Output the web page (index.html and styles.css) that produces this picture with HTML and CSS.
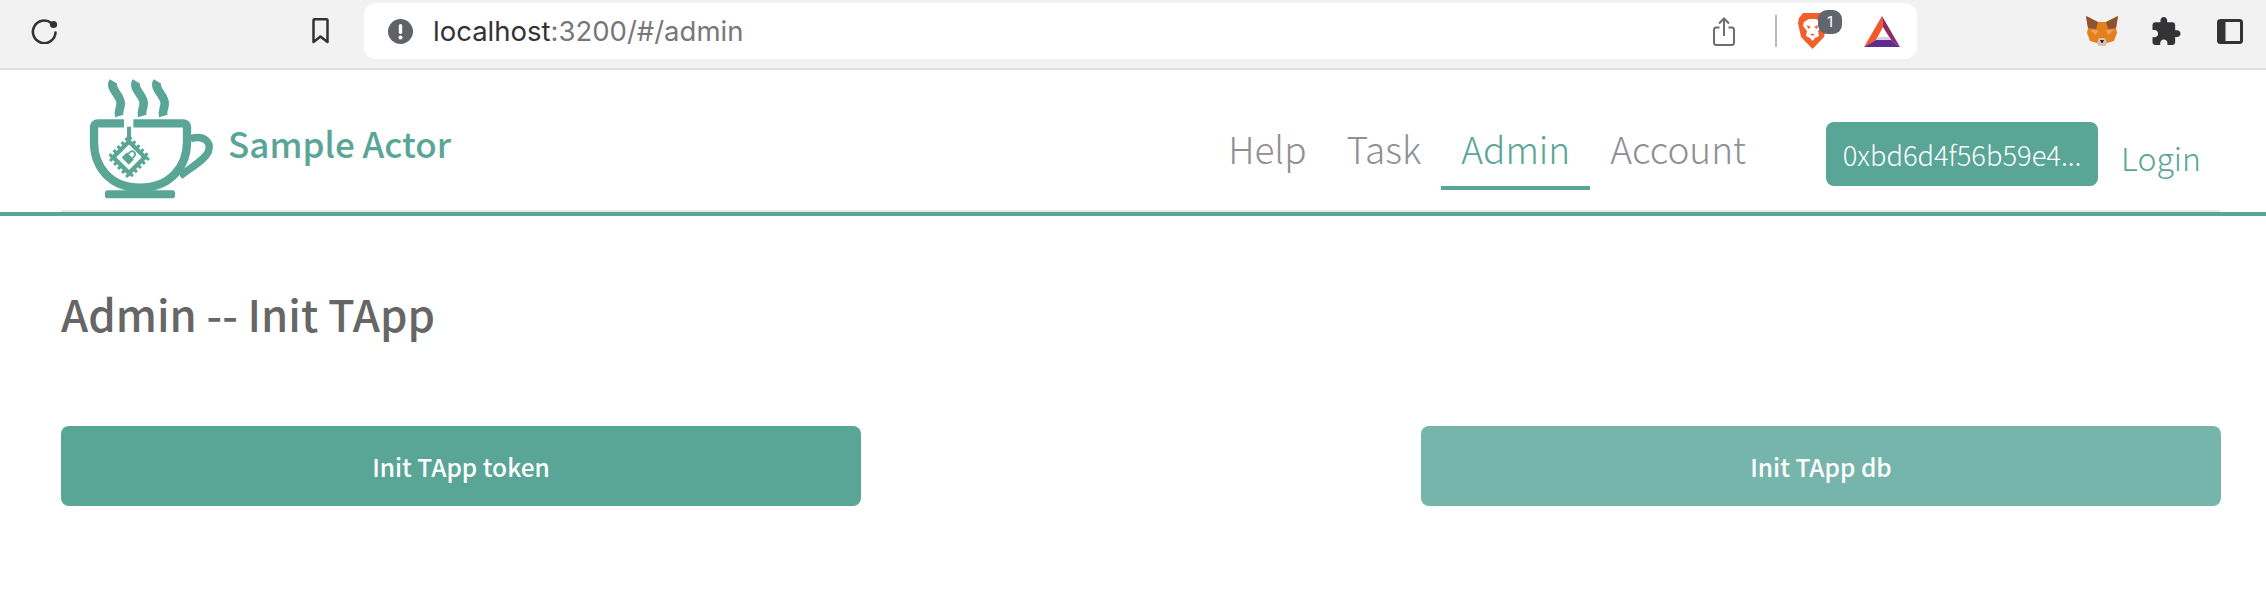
FILE: index.html
```html
<!DOCTYPE html>
<html lang="en">
<head>
    <meta charset="UTF-8">
    <meta name="viewport" content="width=device-width, initial-scale=1.0">
    <title>Sample Actor</title>
    <link rel="stylesheet" href="styles.css">
</head>
<body>
    <!-- Browser toolbar -->
    <div class="toolbar">
        <svg class="icon-reload" width="27" height="26" viewBox="0 0 27 26">
            <path d="M20.5 5.2A11.3 11.3 0 1 0 24.5 14.5" fill="none" stroke="#333336" stroke-width="2.6" stroke-linecap="round"/>
            <circle cx="22.5" cy="6.5" r="3.6" fill="#333336"/>
        </svg>
        <svg class="icon-bookmark" width="19" height="26" viewBox="0 0 19 26">
            <path d="M2.5 2.2Q2.5 1.3 3.5 1.3H15.5Q16.5 1.3 16.5 2.2V24L9.5 18.5L2.5 24Z" fill="none" stroke="#333336" stroke-width="2.5" stroke-linejoin="round"/>
        </svg>
        <div class="address-bar">
            <svg class="icon-alert" width="25" height="25" viewBox="0 0 25 25">
                <circle cx="12.5" cy="12.5" r="12.5" fill="#5f6368"/>
                <rect x="10.8" y="5" width="3.4" height="10" rx="1.7" fill="#fff"/>
                <circle cx="12.5" cy="18.5" r="2" fill="#fff"/>
            </svg>
            <span class="url"><span class="url-host">localhost</span>:3200/#/admin</span>
            <svg class="icon-share" width="22" height="29" viewBox="0 0 22 29">
                <path d="M6.5 10.5H3.5Q1 10.5 1 13V25.5Q1 28 3.5 28H18.5Q21 28 21 25.5V13Q21 10.5 18.5 10.5H15.5" fill="none" stroke="#6e6e70" stroke-width="2"/>
                <path d="M11 19V1.5M6 6.5L11 1.5L16 6.5" fill="none" stroke="#6e6e70" stroke-width="2"/>
            </svg>
            <div class="bar-divider"></div>
            <div class="brave-wrap">
                <svg width="29" height="36" viewBox="0 0 29 36">
                    <path d="M5 0H24L28 5L29 10L26 24L14.5 36L3 24L0 10L1 5Z" fill="#f1602a"/>
                    <path d="M6 9L11 6H18L23 9L24 13L20 18L21 23L17 25L14.5 28L12 25L8 23L9 18L5 13Z" fill="#fff"/>
                    <path d="M9 12L13 14L10 16ZM20 12L16 14L19 16ZM12 21H17L14.5 23Z" fill="#f1602a"/>
                </svg>
                <span class="badge">1</span>
            </div>
            <svg class="icon-bat" width="36" height="31" viewBox="0 0 36 31">
                <polygon points="18,0 0,31 12,24 19,11" fill="#f05a2b"/>
                <polygon points="18,0 36,31 27,24 19,11" fill="#8e2a64"/>
                <polygon points="0,31 36,31 27,24 12,24" fill="#5f2d8c"/>
                <polygon points="12,24 27,24 25.5,21 13.5,21" fill="#d9cfe6"/>
            </svg>
        </div>
        <svg class="icon-fox" width="32" height="30" viewBox="0 0 32 30">
            <polygon points="0,0 12,6 20,6 32,0 30,12 31,17 28,25 21,27 19,30 13,30 11,27 4,25 1,17 2,12" fill="#e4811f"/>
            <polygon points="0,0 12,6 10,13 2,12" fill="#8c5330"/>
            <polygon points="32,0 20,6 22,13 30,12" fill="#8c5330"/>
            <polygon points="4,14 12,14 10,19" fill="#f0a05a"/>
            <polygon points="28,14 20,14 22,19" fill="#f0a05a"/>
            <polygon points="13,22 19,22 21,27 19,30 13,30 11,27" fill="#d7c1b3"/>
            <polygon points="14,24 18,24 16.5,27 15.5,27" fill="#2b2420"/>
        </svg>
        <svg class="icon-puzzle" width="29" height="28" viewBox="2 1 21 21">
            <path d="M20.5 11H19V7c0-1.1-.9-2-2-2h-4V3.5C13 2.12 11.88 1 10.5 1S8 2.12 8 3.5V5H4c-1.1 0-1.99.9-1.99 2v3.8H3.5c1.49 0 2.7 1.21 2.7 2.7s-1.21 2.7-2.7 2.7H2V20c0 1.1.9 2 2 2h3.8v-1.5c0-1.49 1.21-2.7 2.7-2.7 1.49 0 2.7 1.21 2.7 2.7V22H17c1.1 0 2-.9 2-2v-4h1.5c1.38 0 2.5-1.12 2.5-2.5S21.88 11 20.5 11z" fill="#333336"/>
        </svg>
        <svg class="icon-sidebar" width="26" height="25" viewBox="0 0 26 25">
            <rect x="1.5" y="1.5" width="23" height="22" rx="2" fill="none" stroke="#333336" stroke-width="3"/>
            <rect x="1.5" y="1.5" width="7" height="22" fill="#333336"/>
        </svg>
    </div>

    <!-- App header -->
    <header class="app-header">
        <div class="header-inner">
            <a class="brand">
                <svg class="logo" width="169" height="130" viewBox="3 0 507 390">
                    <g fill="none" stroke="#59a596" stroke-linejoin="miter">
                        <path d="M160 34C146 58 186 76 182 104C180 118 174 124 178 138" stroke-width="26"/>
                        <path d="M229 34C215 58 255 76 251 104C249 118 243 124 247 138" stroke-width="26"/>
                        <path d="M292 34C278 58 318 76 314 104C312 118 306 124 310 138" stroke-width="26"/>
                        <path d="M192 160H114Q102 160 102 172V216C102 290 150 353 240 353C330 353 381 290 381 216V172Q381 160 369 160H220" stroke-width="25"/>
                        <path d="M392 206C432 194 456 216 445 245C436 268 394 292 360 318" stroke-width="22"/>
                        <path d="M207 170V206" stroke-width="12"/>
                        <rect x="165" y="220" width="84" height="84" transform="rotate(45 207 262)" stroke-width="12" stroke-dasharray="9 8"/>
                    </g>
                    <rect x="167" y="222" width="80" height="80" transform="rotate(45 207 262)" fill="#59a596"/>
                    <rect x="180" y="235" width="54" height="54" transform="rotate(45 207 262)" fill="#fff"/>
                    <g transform="rotate(45 207 262)">
                        <rect x="192" y="256" width="30" height="22" rx="2" fill="#59a596"/>
                        <path d="M198 256V249A9 9 0 0 1 216 249V256" fill="none" stroke="#59a596" stroke-width="5"/>
                    </g>
                    <rect x="135" y="361" width="210" height="24" rx="8" fill="#59a596"/>
                </svg>
                <span class="brand-name">Sample Actor</span>
            </a>
            <nav class="nav">
                <a class="nav-link">Help</a>
                <a class="nav-link">Task</a>
                <a class="nav-link active">Admin</a>
                <a class="nav-link">Account</a>
            </nav>
            <button class="wallet">0xbd6d4f56b59e4...</button>
            <a class="login">Login</a>
        </div>
    </header>

    <main class="content">
        <h1 class="title">Admin -- Init TApp</h1>
        <div class="actions">
            <button class="action">Init TApp token</button>
            <button class="action disabled">Init TApp db</button>
        </div>
    </main>
</body>
</html>
```

FILE: styles.css
```css
body {
    margin: 0;
    background: #fff;
    font-family: "Noto Sans CJK SC", "Noto Sans", sans-serif;
    overflow: hidden;
}
button {
    border: none;
    font-family: inherit;
    color: #fff;
    background-color: #59a596;
}

/* toolbar */
.toolbar {
    display: flex;
    align-items: center;
    box-sizing: border-box;
    height: 70px;
    padding-bottom: 6px;
    background-color: #f2f2f2;
    border-bottom: 2px solid #dcdde0;
}
.icon-reload {
    margin-left: 31px;
}
.icon-bookmark {
    margin-left: 253px;
}
.address-bar {
    display: flex;
    align-items: center;
    box-sizing: border-box;
    width: 1553px;
    height: 56px;
    margin-left: 34px;
    padding-left: 24px;
    background-color: #fff;
    border-radius: 12px;
}
.url {
    margin-left: 20px;
    width: 1280px;
    font-family: Inter, "Liberation Sans", sans-serif;
    font-size: 27.5px;
    color: #77777a;
}
.url-host {
    color: #333336;
}
.bar-divider {
    width: 2px;
    height: 32px;
    margin-left: 40px;
    background-color: #b9b9bb;
}
.brave-wrap {
    position: relative;
    display: flex;
    margin-left: 21px;
}
.badge {
    position: absolute;
    top: -3px;
    left: 20px;
    width: 24px;
    height: 24px;
    border-radius: 9px;
    background-color: #62646f;
    color: #fff;
    font-family: Inter, "Liberation Sans", sans-serif;
    font-size: 15px;
    line-height: 24px;
    text-align: center;
}
.icon-bat {
    margin-left: 37px;
}
.icon-fox {
    margin-left: 169px;
}
.icon-puzzle {
    margin-left: 34px;
}
.icon-sidebar {
    margin-left: 36px;
}

/* header */
.app-header {
    border-bottom: 4px solid #59a596;
}
.header-inner {
    display: flex;
    align-items: flex-start;
    box-sizing: border-box;
    height: 142px;
    margin: 0 46px 0 61px;
    padding-right: 19px;
    border-bottom: 2px solid #e8e8e8;
}
.brand {
    display: flex;
    align-items: center;
    height: 130px;
}
.logo {
    flex-shrink: 0;
}
.brand-name {
    margin-left: -2px;
    padding-top: 14px;
    font-size: 35px;
    font-weight: 500;
    white-space: nowrap;
    color: #59a596;
}
.nav {
    display: flex;
    margin-left: auto;
    margin-top: 46px;
}
.nav-link {
    padding: 0 20px;
    height: 74px;
    box-sizing: border-box;
    line-height: 64px;
    font-size: 37px;
    font-weight: 300;
    color: #8f8f94;
}
.nav-link.active {
    color: #59a596;
    border-bottom: 4px solid #59a596;
}
.wallet {
    width: 272px;
    height: 64px;
    margin-left: 60px;
    margin-top: 52px;
    padding: 0;
    border-radius: 8px;
    font-size: 27.3px;
    font-weight: 300;
}
.login {
    margin-left: 23px;
    margin-top: 62px;
    font-size: 32px;
    font-weight: 300;
    line-height: 50px;
    color: #59a596;
}

/* main */
.content {
    padding: 0 45px 0 61px;
}
.title {
    margin: 62px 0 0;
    font-size: 43.7px;
    line-height: 70px;
    font-weight: 500;
    color: #666;
}
.actions {
    display: flex;
    justify-content: space-between;
    margin-top: 78px;
}
.action {
    width: 800px;
    height: 80px;
    border-radius: 8px;
    font-size: 24.5px;
    font-weight: 500;
}
.action.disabled {
    background-color: #76b5ab;
}
```
